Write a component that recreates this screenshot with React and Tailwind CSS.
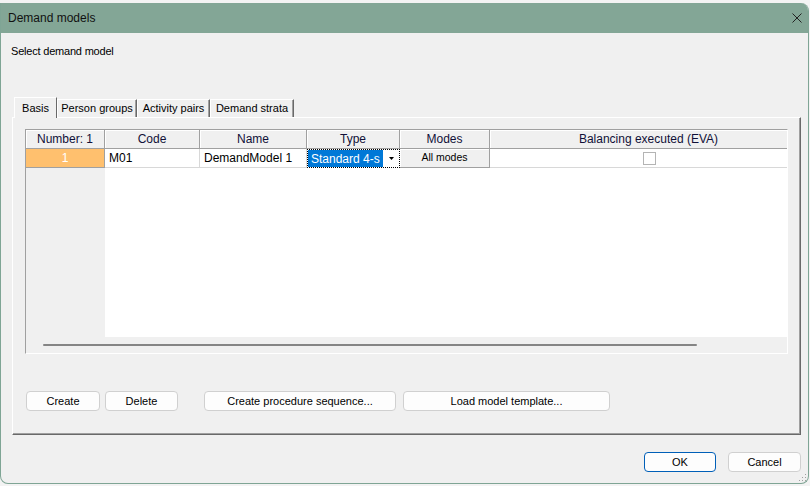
import React from "react";

const cols = [
  { label: "Number: 1", w: "w-[79px]" },
  { label: "Code", w: "w-[95px]" },
  { label: "Name", w: "w-[107px]" },
  { label: "Type", w: "w-[93px]" },
  { label: "Modes", w: "w-[90px]" },
  { label: "Balancing executed (EVA)", w: "w-[318px]" },
];

const Button = ({ children, className = "" }) => (
  <button
    className={`h-[20px] rounded-[4px] border border-[#d0d0d0] bg-[#fdfdfd] text-[11px] leading-none text-black ${className}`}
  >
    {children}
  </button>
);

const Tab = ({ label, active, w }) =>
  active ? (
    <div
      className={`${w} relative z-10 -mb-px flex h-[21px] items-start justify-center border-l border-t border-white border-r border-r-[#696969] bg-[#f0f0f0] pt-[4px] text-[11px] leading-[13px]`}
    >
      {label}
    </div>
  ) : (
    <div
      className={`${w} flex h-[18px] items-start justify-center border-l border-t border-white border-r border-r-[#696969] bg-[#f0f0f0] pt-[2px] text-[11px] leading-[13px] shadow-[inset_-1px_0_0_#a0a0a0]`}
    >
      {label}
    </div>
  );

export default function App() {
  return (
    <div className="h-[486px] w-[810px] bg-[#f3f3f3] pt-[3px] font-['Liberation_Sans',Arial,sans-serif] text-black">
      <div className="relative flex h-[481px] w-[809px] flex-col overflow-hidden rounded-r-[8px] rounded-bl-[8px] border-b border-l border-r border-[#7fa595] bg-[#f0f0f0]">
        {/* Title bar */}
        <div className="flex h-[30px] shrink-0 items-center justify-between bg-[#83a696] pl-[7px] pr-[6px]">
          <span className="text-[12px] text-[#111]">Demand models</span>
          <svg width="10" height="10" viewBox="0 0 10 10" className="text-[#222]">
            <path d="M0.5 0.5L9.5 9.5M9.5 0.5L0.5 9.5" stroke="currentColor" strokeWidth="1" />
          </svg>
        </div>

        <div className="ml-[10px] mt-[12px] h-[13px] text-[11px] leading-[13px] tracking-[-0.2px]">
          Select demand model
        </div>

        {/* Tabs */}
        <div className="ml-[13px] mt-[39px] flex h-[20px] items-end">
          <Tab label="Basis" active w="w-[43px]" />
          <Tab label="Person groups" w="w-[80px]" />
          <Tab label="Activity pairs" w="w-[73px]" />
          <Tab label="Demand strata" w="w-[84px]" />
        </div>

        {/* Tab panel */}
        <div className="ml-[11px] flex h-[318px] w-[789px] flex-col border-l border-t border-white border-b-[#696969] border-r-[#696969] border-b border-r pl-[12px] pt-[11px] shadow-[inset_-1px_-1px_0_#a0a0a0]">
          {/* Grid */}
          <div className="flex h-[225px] w-[763px] flex-col overflow-hidden border-l border-t border-[#a0a0a0] border-b-white border-r-white border-b border-r bg-white">
            <div className="flex h-[19px] shrink-0 bg-[#f0f0f0]">
              {cols.map((c) => (
                <div
                  key={c.label}
                  className={`${c.w} flex shrink-0 items-center justify-center border-b border-r border-[#a0a0a0] text-[12px] text-[#101038] shadow-[inset_1px_1px_0_#fff]`}
                >
                  {c.label}
                </div>
              ))}
            </div>
            <div className="flex h-[19px] shrink-0 text-[12px]">
              <div className="flex w-[79px] shrink-0 items-center justify-center border-b border-r border-[#a0a0a0] bg-[#ffc06e] text-white">
                1
              </div>
              <div className="flex w-[95px] shrink-0 items-center border-b border-r border-[#d8d8d8] pl-[4px]">M01</div>
              <div className="flex w-[107px] shrink-0 items-center border-b border-r border-[#d8d8d8] pl-[4px]">DemandModel 1</div>
              <div className="flex w-[93px] shrink-0 border border-dotted border-black">
                <div className="flex flex-1 items-center whitespace-nowrap bg-[#0078d7] pl-[3px] text-white">
                  Standard 4-s
                </div>
                <div className="flex w-[16px] items-center justify-center bg-white">
                  <svg width="5" height="3" viewBox="0 0 5 3">
                    <path d="M0 0H5L2.5 3Z" fill="#000" />
                  </svg>
                </div>
              </div>
              <div className="flex w-[90px] shrink-0 items-center justify-center border-b border-r border-[#a0a0a0] bg-[#f0f0f0] text-[10.5px] shadow-[inset_1px_1px_0_#fff]">
                All modes
              </div>
              <div className="flex w-[318px] shrink-0 items-center justify-center border-b border-[#d8d8d8]">
                <div className="h-[13px] w-[13px] border border-[#b4b4b4] bg-white" />
              </div>
            </div>
            <div className="flex flex-1">
              <div className="w-[79px] bg-[#f0f0f0]" />
              <div className="flex-1 bg-white" />
            </div>
            <div className="flex h-[16px] shrink-0 items-center bg-[#f0f0f0] pl-[17px]">
              <div className="h-[2px] w-[654px] rounded-full bg-[#858585]" />
            </div>
          </div>

          {/* Buttons */}
          <div className="ml-px mt-[37px] flex">
            <Button className="w-[74px]">Create</Button>
            <Button className="ml-[5px] w-[73px]">Delete</Button>
            <Button className="ml-[26px] w-[192px]">Create procedure sequence...</Button>
            <Button className="ml-[7px] w-[207px]">Load model template...</Button>
          </div>
        </div>

        {/* Dialog buttons */}
        <div className="mt-[17px] flex justify-end pr-[7px]">
          <button className="h-[20px] w-[72px] rounded-[4px] border border-[#005fb8] bg-[#fdfdfd] text-[11px] leading-none">
            OK
          </button>
          <button className="ml-[12px] h-[20px] w-[73px] rounded-[4px] border border-[#d0d0d0] bg-[#fdfdfd] text-[11px] leading-none">
            Cancel
          </button>
        </div>

        {/* Resize grip */}
        <svg width="8" height="8" viewBox="0 0 8 8" className="absolute bottom-[1px] right-[1px]">
          <rect x="6" y="0" width="1" height="1" fill="#a0a0a0" />
          <rect x="3" y="3" width="1" height="1" fill="#a0a0a0" />
          <rect x="6" y="3" width="1" height="1" fill="#a0a0a0" />
          <rect x="0" y="6" width="1" height="1" fill="#a0a0a0" />
          <rect x="3" y="6" width="1" height="1" fill="#a0a0a0" />
          <rect x="6" y="6" width="1" height="1" fill="#a0a0a0" />
        </svg>
      </div>
    </div>
  );
}
